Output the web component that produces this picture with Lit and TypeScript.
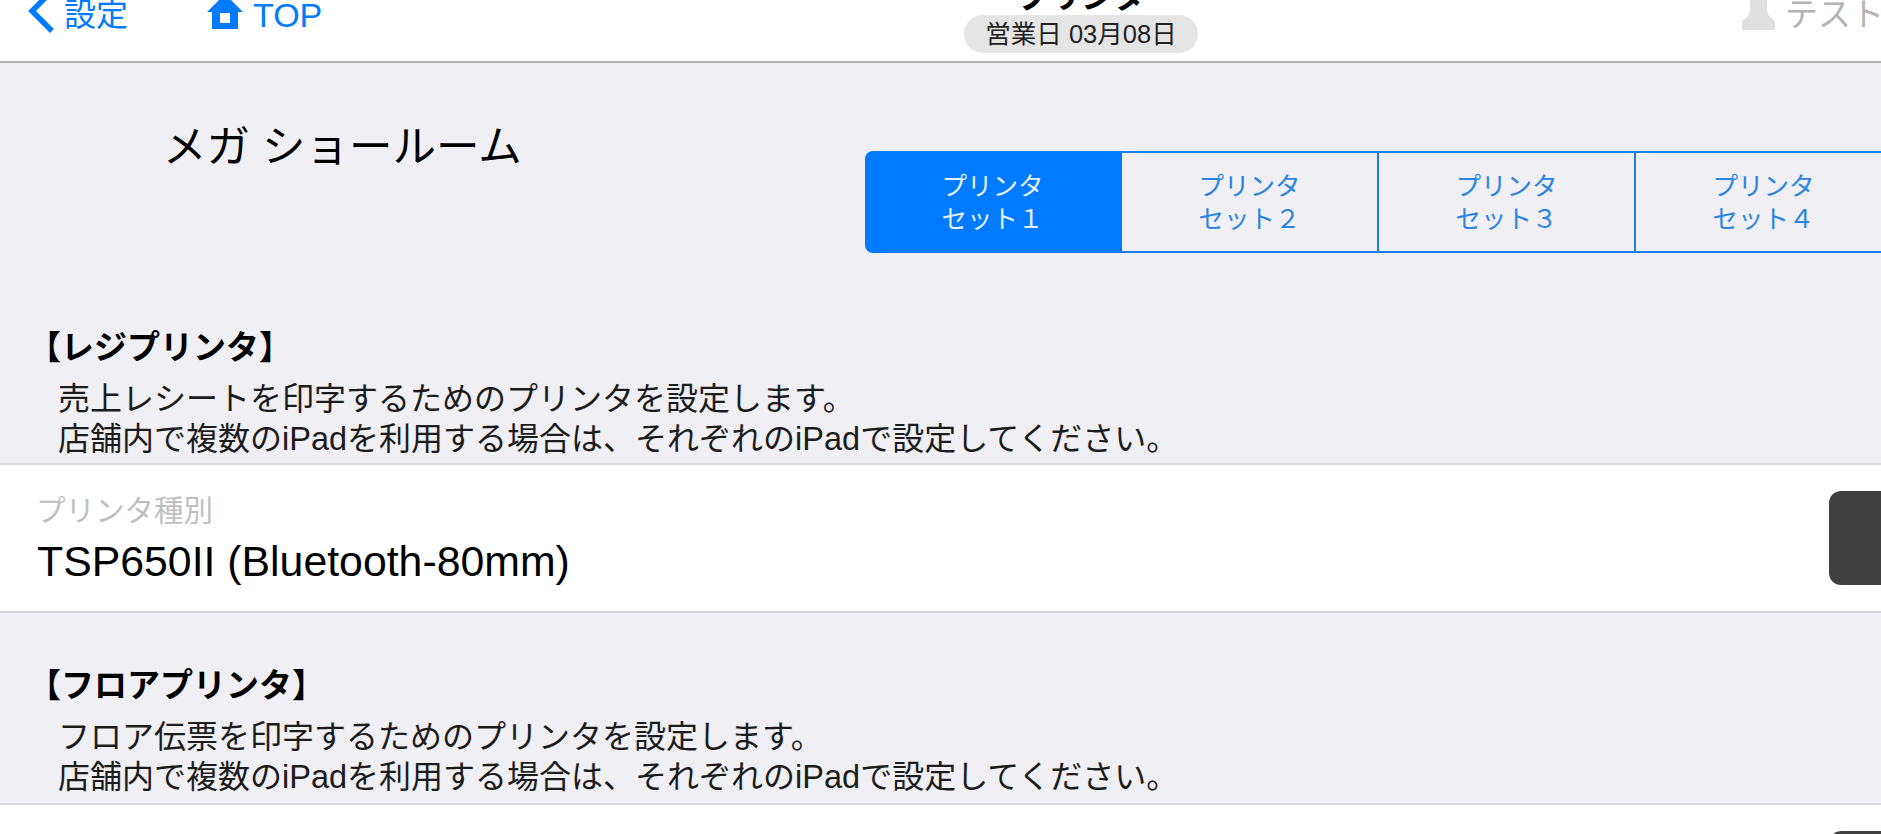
import { LitElement, html, css } from "lit";
import { customElement } from "lit/decorators.js";

const SETS = ["１", "２", "３", "４"];

@customElement("app-root")
export class AppRoot extends LitElement {
  static styles = css`
    :host {
      display: block;
      height: 100vh;
      overflow: hidden;
      background: #efeff4;
      color: #000;
      font-family: "Liberation Sans", "Noto Sans CJK JP", sans-serif;
    }

    /* the page is scrolled a little, so the top of the bar is cut off */
    .page {
      margin-top: -20px;
    }

    .bar {
      display: grid;
      grid-template-columns: 964px 234px 1fr;
      height: 81px;
      background: #fff;
      border-bottom: 2px solid #b2b2b2;
    }

    .nav {
      display: flex;
      align-items: flex-start;
      padding: 16px 0 0 28px;
      color: #007aff;
      font-size: 32px;
      line-height: 38px;
    }

    .back {
      display: flex;
      align-items: flex-start;
      gap: 9px;
      width: 179px;
    }

    .back svg {
      margin-top: -7px;
    }

    .top {
      display: flex;
      align-items: flex-start;
      gap: 10px;
      font-size: 34px;
    }

    .top svg {
      margin-top: -2px;
    }

    .center {
      display: flex;
      flex-direction: column;
      align-items: center;
    }

    .title {
      font-size: 32px;
      font-weight: 700;
      line-height: 34px;
      height: 35px;
    }

    .pill {
      box-sizing: border-box;
      width: 234px;
      height: 38px;
      border-radius: 19px;
      background: #e5e5e5;
      color: #222;
      font-size: 25.5px;
      line-height: 38px;
      text-align: center;
      white-space: nowrap;
    }

    .user {
      display: flex;
      align-items: flex-start;
      gap: 10px;
      padding: 16px 0 0 544px;
      color: #b4b4b4;
      font-size: 33px;
      line-height: 38px;
      white-space: nowrap;
    }

    .user svg {
      margin-top: -2px;
    }

    .head {
      display: grid;
      grid-template-columns: 865px 1fr;
      height: 262px;
    }

    .shop {
      padding: 54px 0 0 163px;
      font-size: 43.5px;
      line-height: 60px;
      white-space: nowrap;
    }

    .sets {
      display: flex;
      align-self: start;
      margin-top: 88px;
      width: 1028px;
      height: 102px;
    }

    .set {
      box-sizing: border-box;
      flex: 0 0 257px;
      border: 2px solid #1a7fe8;
      border-left-width: 0;
      color: #2a84e0;
      font-size: 25.5px;
      line-height: 33px;
      text-align: center;
      padding-top: 17px;
    }

    .set.on {
      background: #007aff;
      border-color: #007aff;
      border-radius: 8px 0 0 8px;
      color: #e4f0ff;
    }

    .section h2 {
      margin: 0;
      padding-left: 28px;
      font-size: 33px;
      font-weight: 700;
      line-height: 46px;
    }

    .section p {
      margin: 0;
      padding: 8px 0 0 58px;
      color: #1c1c1c;
      font-size: 32px;
      line-height: 40px;
      white-space: nowrap;
      height: 92px;
      box-sizing: border-box;
    }

    .gap + .section p {
      height: 94px;
    }

    .latin {
      font-size: 32.5px;
    }

    .row {
      display: flex;
      justify-content: space-between;
      align-items: center;
      height: 146px;
      background: #fff;
      border-top: 2px solid #d9d9de;
      border-bottom: 2px solid #d4d4d8;
    }

    .row .text {
      padding-left: 37px;
    }

    .row label {
      display: block;
      margin-left: -1px;
      color: #c0c0c0;
      font-size: 29.5px;
      line-height: 42px;
    }

    .row .value {
      padding-top: 3px;
      font-size: 42.8px;
      line-height: 52px;
      white-space: nowrap;
    }

    .row .btn {
      width: 52px;
      height: 94px;
      border-radius: 12px 0 0 12px;
      background: #404040;
    }

    .gap {
      height: 50px;
    }
  `;

  private renderSection(title: string, first: string, value: string) {
    return html`
      <section class="section">
        <h2>${title}</h2>
        <p>
          ${first}<br />店舗内で複数の<span class="latin">iPad</span>を利用する場合は、それぞれの<span
            class="latin"
            >iPad</span
          >で設定してください。
        </p>
        <div class="row">
          <div class="text">
            <label>プリンタ種別</label>
            <div class="value">${value}</div>
          </div>
          <div class="btn"></div>
        </div>
      </section>
    `;
  }

  render() {
    return html`
      <div class="page">
        <header class="bar">
          <div class="nav">
            <div class="back">
              <svg width="27" height="46" viewBox="0 0 27 46">
                <path d="M24 2 L4 22 L24 42" fill="none" stroke="#007aff" stroke-width="5.5" />
              </svg>
              <span>設定</span>
            </div>
            <div class="top">
              <svg width="36" height="36" viewBox="0 0 36 36">
                <path
                  fill="#007aff"
                  fill-rule="evenodd"
                  d="M18 0 L36 18 L31 18 L31 35 L5 35 L5 18 L0 18 Z M13 19 L13 29 L23 29 L23 19 Z"
                />
              </svg>
              <span>TOP</span>
            </div>
          </div>
          <div class="center">
            <div class="title">プリンタ</div>
            <div class="pill">営業日 03月08日</div>
          </div>
          <div class="user">
            <svg width="33" height="50" viewBox="0 0 33 50">
              <path
                fill="#e0e0e0"
                d="M8 0 H25 V14 C25 20 27 23 32 26 L33 28 V36 H0 V28 L1 26 C6 23 8 20 8 14 Z"
              />
            </svg>
            <span>テスト</span>
          </div>
        </header>
        <div class="head">
          <div class="shop">メガ ショールーム</div>
          <div class="sets">
            ${SETS.map(
              (n, i) => html`<div class="set ${i === 0 ? "on" : ""}">プリンタ<br />セット${n}</div>`,
            )}
          </div>
        </div>
        ${this.renderSection(
          "【レジプリンタ】",
          "売上レシートを印字するためのプリンタを設定します。",
          "TSP650II (Bluetooth-80mm)",
        )}
        <div class="gap"></div>
        ${this.renderSection(
          "【フロアプリンタ】",
          "フロア伝票を印字するためのプリンタを設定します。",
          "TSP650II (Bluetooth-80mm)",
        )}
      </div>
    `;
  }
}
